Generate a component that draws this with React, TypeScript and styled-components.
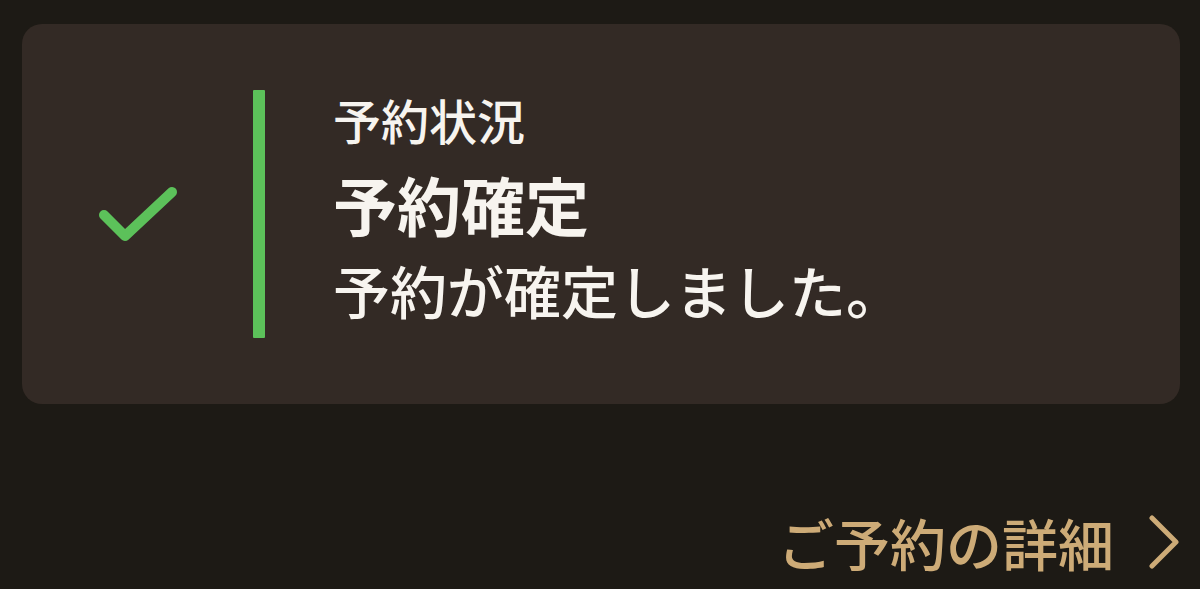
import React from 'react';
import styled, { createGlobalStyle } from 'styled-components';

const GlobalStyle = createGlobalStyle`
    html, body {
        margin: 0;
        padding: 0;
        background: #1d1a15;
    }
    body {
        font-family: "Noto Sans CJK JP", "Noto Sans", sans-serif;
        color: #f7f4ef;
    }
`;

const Page = styled.div`
    width: 1200px;
    height: 589px;
    box-sizing: border-box;
    padding: 24px 20px 0 22px;
    display: flex;
    flex-direction: column;
    background: #1d1a15;
`;

const StatusCard = styled.section`
    height: 380px;
    box-sizing: border-box;
    background: #332a25;
    border-radius: 20px;
    display: flex;
    align-items: center;
    padding: 0 0 0 76px;
`;

const IconCell = styled.div`
    width: 80px;
    display: flex;
    align-items: center;
    justify-content: center;
    margin-right: 75px;
`;

const Accent = styled.div<{ color: string }>`
    width: 12px;
    height: 248px;
    background: ${props => props.color};
    border-radius: 1px;
    margin-right: 68px;
`;

const TextBlock = styled.div`
    display: flex;
    flex-direction: column;
    margin-top: -15px;
`;

const Label = styled.div`
    font-size: 48px;
    line-height: 48px;
    font-weight: 500;
    margin-bottom: 28px;
`;

const Title = styled.div`
    font-size: 64px;
    line-height: 64px;
    font-weight: 700;
    margin-bottom: 26px;
`;

const Message = styled.div`
    font-size: 57px;
    line-height: 57px;
    font-weight: 500;
`;

const LinkRow = styled.div`
    display: flex;
    justify-content: flex-end;
    align-items: center;
    padding-top: 106px;
`;

const DetailLink = styled.a`
    display: flex;
    align-items: center;
    gap: 34px;
    color: #cdab77;
    font-size: 56px;
    line-height: 64px;
    font-weight: 500;
    text-decoration: none;
    cursor: pointer;
`;

const CheckIcon = () => (
    <svg width="80" height="60" viewBox="0 0 80 60" fill="none">
        <path
            d="M6 31 L27 52 L74 8"
            stroke="#5cc15a"
            strokeWidth="10"
            strokeLinecap="round"
            strokeLinejoin="round"
        />
    </svg>
);

const Chevron = () => (
    <svg width="32" height="54" viewBox="0 0 32 54" fill="none">
        <path
            d="M4 3 L28 27 L4 51"
            stroke="#cdab77"
            strokeWidth="5"
            strokeLinecap="round"
            strokeLinejoin="round"
        />
    </svg>
);

export default function App() {
    return (
        <>
            <GlobalStyle />
            <Page>
                <StatusCard>
                    <IconCell>
                        <CheckIcon />
                    </IconCell>
                    <Accent color="#5cc15a" />
                    <TextBlock>
                        <Label>予約状況</Label>
                        <Title>予約確定</Title>
                        <Message>予約が確定しました。</Message>
                    </TextBlock>
                </StatusCard>
                <LinkRow>
                    <DetailLink>
                        ご予約の詳細
                        <Chevron />
                    </DetailLink>
                </LinkRow>
            </Page>
        </>
    );
}
